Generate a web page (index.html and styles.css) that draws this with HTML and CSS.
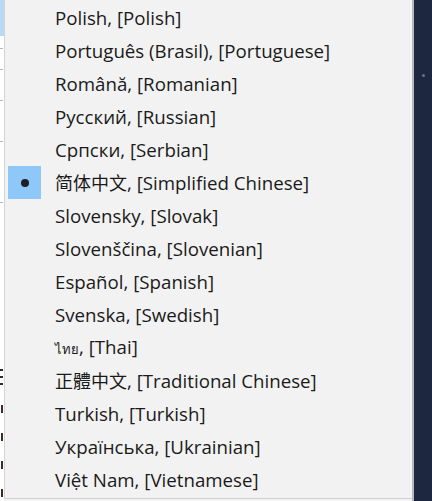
FILE: index.html
```html
<!DOCTYPE html>
<html lang="en">
<head>
<meta charset="utf-8">
<title>Language menu</title>
<link rel="stylesheet" href="styles.css">
</head>
<body>
<div class="screen">
  <div class="behind-left">
    <div class="bl-blue"></div>
    <div class="bl-white">
      <span class="tick t1"></span>
      <span class="tick t2"></span>
      <span class="tick t3"></span>
      <span class="tick t4"></span>
      <span class="tick t5"></span>
      <span class="frag"></span>
      <span class="dash"></span>
      <span class="dash"></span>
      <span class="dash"></span>
      <span class="dash"></span>
    </div>
  </div>
  <ul class="menu">
    <li class="item"><span class="mark"></span><span class="label">Polish, [Polish]</span></li>
    <li class="item"><span class="mark"></span><span class="label">Português (Brasil), [Portuguese]</span></li>
    <li class="item"><span class="mark"></span><span class="label">Română, [Romanian]</span></li>
    <li class="item"><span class="mark"></span><span class="label">Русский, [Russian]</span></li>
    <li class="item"><span class="mark"></span><span class="label">Српски, [Serbian]</span></li>
    <li class="item checked"><span class="mark"><span class="dot"></span></span><span class="label"><span class="sc">简体中文</span>, [Simplified Chinese]</span></li>
    <li class="item"><span class="mark"></span><span class="label">Slovensky, [Slovak]</span></li>
    <li class="item"><span class="mark"></span><span class="label">Slovenščina, [Slovenian]</span></li>
    <li class="item"><span class="mark"></span><span class="label">Español, [Spanish]</span></li>
    <li class="item"><span class="mark"></span><span class="label">Svenska, [Swedish]</span></li>
    <li class="item"><span class="mark"></span><span class="label"><span class="thai">ไทย</span>, [Thai]</span></li>
    <li class="item"><span class="mark"></span><span class="label"><span class="tc">正體中文</span>, [Traditional Chinese]</span></li>
    <li class="item"><span class="mark"></span><span class="label">Turkish, [Turkish]</span></li>
    <li class="item"><span class="mark"></span><span class="label">Українська, [Ukrainian]</span></li>
    <li class="item"><span class="mark"></span><span class="label">Việt Nam, [Vietnamese]</span></li>
  </ul>
  <div class="behind-right"><span class="spot"></span></div>
</div>
</body>
</html>
```
FILE: styles.css
```css
html, body {
  margin: 0;
  padding: 0;
  width: 432px;
  height: 501px;
  overflow: hidden;
  background: #f2f2f2;
}

.screen {
  display: flex;
  width: 432px;
  height: 501px;
  font-family: "Open Sans", "Noto Sans", "Noto Sans CJK SC", sans-serif;
}

.behind-left {
  width: 4px;
  flex: none;
  display: flex;
  flex-direction: column;
  background: #ffffff;
}

.bl-blue {
  height: 36px;
  background: #b9daf6;
}

.bl-white {
  flex: 1;
  display: flex;
  flex-direction: column;
  padding-top: 4px;
  overflow: hidden;
}

.tick {
  display: block;
  width: 3px;
  height: 1px;
  background: #b8b8b8;
}
.t1 { margin-top: 8px; }
.t2 { margin-top: 20px; }
.t3 { margin-top: 30px; }
.t4 { margin-top: 40px; }
.t5 { margin-top: 60px; }

.frag {
  display: block;
  width: 3px;
  height: 12px;
  margin-top: 166px;
  border-top: 2px solid #2a2a2a;
  border-bottom: 2px solid #2a2a2a;
  background: linear-gradient(#2a2a2a, #2a2a2a) center / 3px 2px no-repeat;
}

.dash {
  display: block;
  width: 2px;
  height: 8px;
  margin-left: 1px;
  margin-top: 20px;
  background: #3a2a2a;
}

.menu {
  list-style: none;
  margin: 0;
  padding: 1px 0 0 0;
  width: 407px;
  height: 497px;
  flex: none;
  background: #f2f2f2;
  border-left: 1px solid #d4d4d4;
  border-bottom: 1px solid #d0d0d0;
  display: flex;
  flex-direction: column;
}

.item {
  height: 33px;
  flex: none;
  display: flex;
  align-items: center;
  padding-left: 3px;
}

.mark {
  width: 33px;
  height: 33px;
  flex: none;
  display: flex;
  align-items: center;
  justify-content: center;
}

.checked .mark {
  background: #8ec8f8;
}

.dot {
  width: 8px;
  height: 8px;
  border-radius: 50%;
  background: #1c1f26;
}

.label {
  margin-left: 14px;
  font-size: 18.7px;
  line-height: 33px;
  color: #1a1a1a;
  white-space: nowrap;
}

.sc {
  font-family: "Noto Sans CJK SC", sans-serif;
  font-size: 18px;
}

.tc {
  font-family: "Noto Sans CJK TC", sans-serif;
  font-size: 18px;
}

.thai {
  font-size: 13px;
}

.behind-right {
  flex: 1;
  border-left: 2px solid #b4b8bf;
  background: #1d2740;
  display: flex;
  flex-direction: column;
  align-items: center;
}

.spot {
  margin-top: 74px;
  width: 3px;
  height: 3px;
  border-radius: 50%;
  background: #6a7285;
}
```
